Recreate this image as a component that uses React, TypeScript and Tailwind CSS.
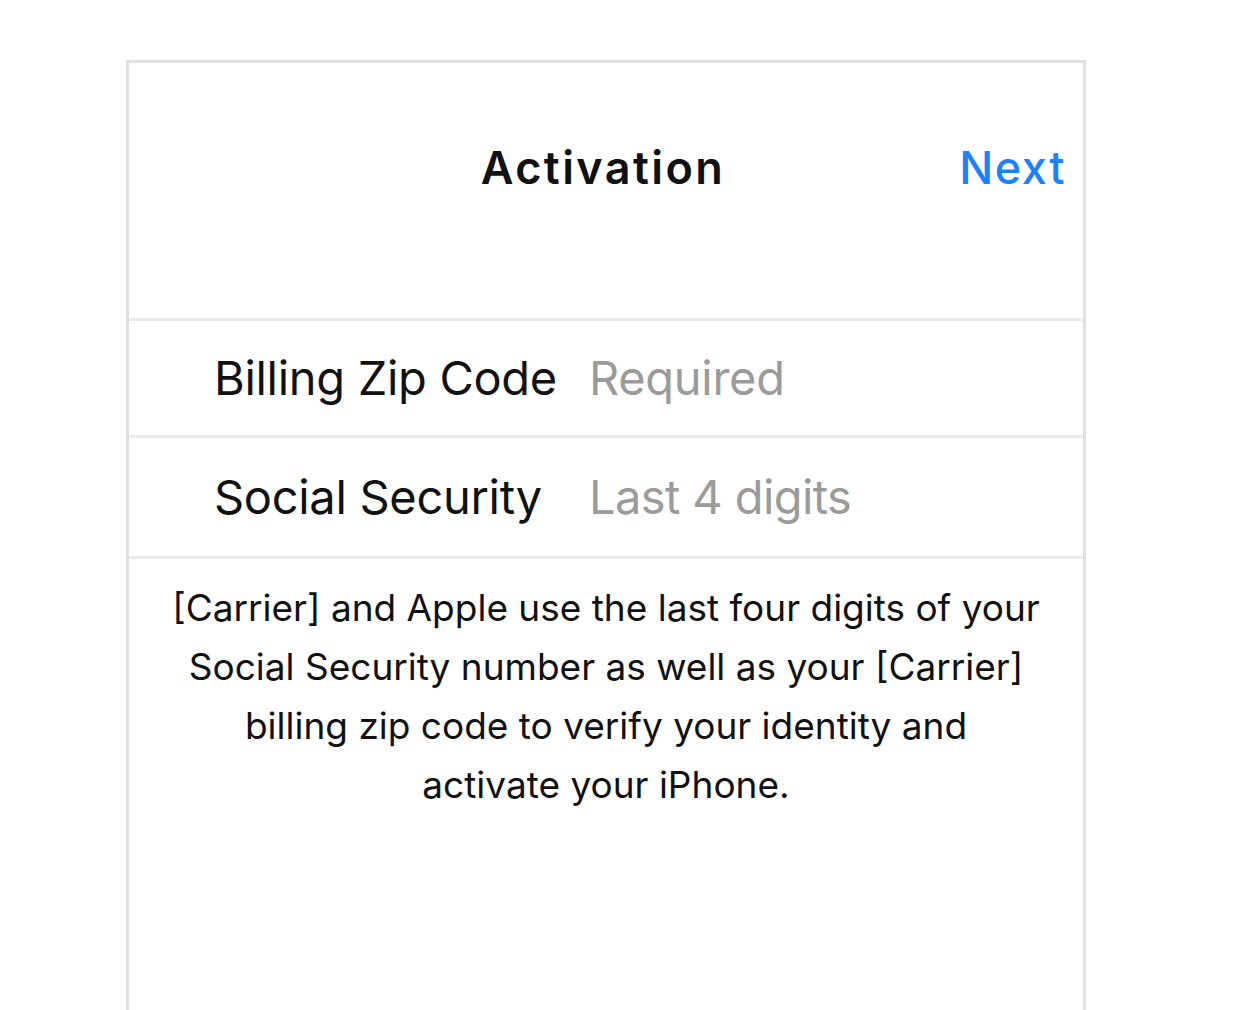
export default function App() {
    return (
        <div className="min-h-screen bg-white" style={{ fontFamily: "Inter, 'Noto Sans', sans-serif" }}>
            <div className="pt-[60px] pl-[126px] h-[1010px] overflow-hidden">
                <div className="w-[960px] h-[960px] border-[3px] border-b-0 border-[#e0e0e0] flex flex-col">
                    {/* header */}
                    <div className="relative h-[255px] flex items-start justify-center pt-[75px]">
                        <h1 className="text-[45px] leading-[60px] font-semibold text-[#111] tracking-[2.4px] pr-[6px]">Activation</h1>
                        <button className="absolute right-[17px] top-[75px] text-[45px] leading-[60px] font-medium text-[#1a82fb] tracking-[1.5px]">Next</button>
                    </div>
                    <div className="h-[3px] bg-[#ebebeb]" />
                    <div className="h-[114px] flex items-center pl-[85px]">
                        <span className="w-[375px] text-[47px] text-[#111] tracking-[-0.3px]">Billing Zip Code</span>
                        <span className="text-[47px] text-[#9b9b9b] tracking-[-0.3px]">Required</span>
                    </div>
                    <div className="h-[3px] bg-[#ebebeb]" />
                    <div className="h-[118px] flex items-center pl-[85px]">
                        <span className="w-[375px] text-[47px] text-[#111] tracking-[-0.3px]">Social Security</span>
                        <span className="text-[47px] text-[#9b9b9b] tracking-[-0.6px]">Last 4 digits</span>
                    </div>
                    <div className="h-[3px] bg-[#ebebeb]" />
                    <p className="pt-[19px] px-[20px] text-center text-[37px] leading-[59px] text-[#111]">
                        [Carrier] and Apple use the last four digits of your<br />
                        Social Security number as well as your [Carrier]<br />
                        billing zip code to verify your identity and<br />
                        activate your iPhone.
                    </p>
                </div>
            </div>
        </div>
    );
}
